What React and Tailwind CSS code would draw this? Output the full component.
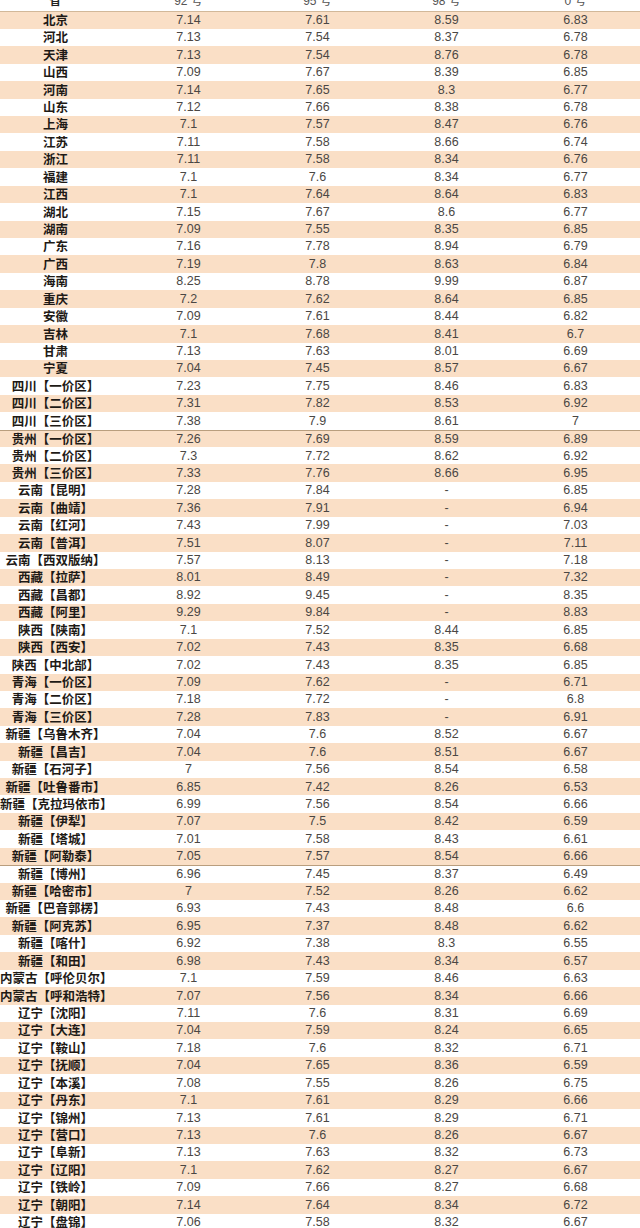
const rows = [
  ['北京', '7.14', '7.61', '8.59', '6.83'],
  ['河北', '7.13', '7.54', '8.37', '6.78'],
  ['天津', '7.13', '7.54', '8.76', '6.78'],
  ['山西', '7.09', '7.67', '8.39', '6.85'],
  ['河南', '7.14', '7.65', '8.3', '6.77'],
  ['山东', '7.12', '7.66', '8.38', '6.78'],
  ['上海', '7.1', '7.57', '8.47', '6.76'],
  ['江苏', '7.11', '7.58', '8.66', '6.74'],
  ['浙江', '7.11', '7.58', '8.34', '6.76'],
  ['福建', '7.1', '7.6', '8.34', '6.77'],
  ['江西', '7.1', '7.64', '8.64', '6.83'],
  ['湖北', '7.15', '7.67', '8.6', '6.77'],
  ['湖南', '7.09', '7.55', '8.35', '6.85'],
  ['广东', '7.16', '7.78', '8.94', '6.79'],
  ['广西', '7.19', '7.8', '8.63', '6.84'],
  ['海南', '8.25', '8.78', '9.99', '6.87'],
  ['重庆', '7.2', '7.62', '8.64', '6.85'],
  ['安徽', '7.09', '7.61', '8.44', '6.82'],
  ['吉林', '7.1', '7.68', '8.41', '6.7'],
  ['甘肃', '7.13', '7.63', '8.01', '6.69'],
  ['宁夏', '7.04', '7.45', '8.57', '6.67'],
  ['四川【一价区】', '7.23', '7.75', '8.46', '6.83'],
  ['四川【二价区】', '7.31', '7.82', '8.53', '6.92'],
  ['四川【三价区】', '7.38', '7.9', '8.61', '7'],
  ['贵州【一价区】', '7.26', '7.69', '8.59', '6.89'],
  ['贵州【二价区】', '7.3', '7.72', '8.62', '6.92'],
  ['贵州【三价区】', '7.33', '7.76', '8.66', '6.95'],
  ['云南【昆明】', '7.28', '7.84', '-', '6.85'],
  ['云南【曲靖】', '7.36', '7.91', '-', '6.94'],
  ['云南【红河】', '7.43', '7.99', '-', '7.03'],
  ['云南【普洱】', '7.51', '8.07', '-', '7.11'],
  ['云南【西双版纳】', '7.57', '8.13', '-', '7.18'],
  ['西藏【拉萨】', '8.01', '8.49', '-', '7.32'],
  ['西藏【昌都】', '8.92', '9.45', '-', '8.35'],
  ['西藏【阿里】', '9.29', '9.84', '-', '8.83'],
  ['陕西【陕南】', '7.1', '7.52', '8.44', '6.85'],
  ['陕西【西安】', '7.02', '7.43', '8.35', '6.68'],
  ['陕西【中北部】', '7.02', '7.43', '8.35', '6.85'],
  ['青海【一价区】', '7.09', '7.62', '-', '6.71'],
  ['青海【二价区】', '7.18', '7.72', '-', '6.8'],
  ['青海【三价区】', '7.28', '7.83', '-', '6.91'],
  ['新疆【乌鲁木齐】', '7.04', '7.6', '8.52', '6.67'],
  ['新疆【昌吉】', '7.04', '7.6', '8.51', '6.67'],
  ['新疆【石河子】', '7', '7.56', '8.54', '6.58'],
  ['新疆【吐鲁番市】', '6.85', '7.42', '8.26', '6.53'],
  ['新疆【克拉玛依市】', '6.99', '7.56', '8.54', '6.66'],
  ['新疆【伊犁】', '7.07', '7.5', '8.42', '6.59'],
  ['新疆【塔城】', '7.01', '7.58', '8.43', '6.61'],
  ['新疆【阿勒泰】', '7.05', '7.57', '8.54', '6.66'],
  ['新疆【博州】', '6.96', '7.45', '8.37', '6.49'],
  ['新疆【哈密市】', '7', '7.52', '8.26', '6.62'],
  ['新疆【巴音郭楞】', '6.93', '7.43', '8.48', '6.6'],
  ['新疆【阿克苏】', '6.95', '7.37', '8.48', '6.62'],
  ['新疆【喀什】', '6.92', '7.38', '8.3', '6.55'],
  ['新疆【和田】', '6.98', '7.43', '8.34', '6.57'],
  ['内蒙古【呼伦贝尔】', '7.1', '7.59', '8.46', '6.63'],
  ['内蒙古【呼和浩特】', '7.07', '7.56', '8.34', '6.66'],
  ['辽宁【沈阳】', '7.11', '7.6', '8.31', '6.69'],
  ['辽宁【大连】', '7.04', '7.59', '8.24', '6.65'],
  ['辽宁【鞍山】', '7.18', '7.6', '8.32', '6.71'],
  ['辽宁【抚顺】', '7.04', '7.65', '8.36', '6.59'],
  ['辽宁【本溪】', '7.08', '7.55', '8.26', '6.75'],
  ['辽宁【丹东】', '7.1', '7.61', '8.29', '6.66'],
  ['辽宁【锦州】', '7.13', '7.61', '8.29', '6.71'],
  ['辽宁【营口】', '7.13', '7.6', '8.26', '6.67'],
  ['辽宁【阜新】', '7.13', '7.63', '8.32', '6.73'],
  ['辽宁【辽阳】', '7.1', '7.62', '8.27', '6.67'],
  ['辽宁【铁岭】', '7.09', '7.66', '8.27', '6.68'],
  ['辽宁【朝阳】', '7.14', '7.64', '8.34', '6.72'],
  ['辽宁【盘锦】', '7.06', '7.58', '8.32', '6.67'],
];

const pageBreaks = [24, 49];

const nameFont = "font-['Noto_Sans_CJK_SC',sans-serif]";
const numFont = "font-['Liberation_Sans',Arial,sans-serif]";

const App = () => {
  return (
    <div className="w-[640px] h-[1228px] overflow-hidden bg-white">
      {/* Header (cut off by the crop) */}
      <div className="-mt-[10.5px] h-[22px] grid grid-cols-[124px_1fr_1fr_1fr_1fr] items-center border-b border-[#d2b899] text-[12px] text-[#555]">
        <div className={`pr-[14px] text-center font-bold text-[#222] ${nameFont}`}>省</div>
        <div className={`text-center ${numFont}`}>92 <span className={nameFont}>号</span></div>
        <div className={`text-center ${numFont}`}>95 <span className={nameFont}>号</span></div>
        <div className={`text-center ${numFont}`}>98 <span className={nameFont}>号</span></div>
        <div className={`text-center ${numFont}`}>0 <span className={nameFont}>号</span></div>
      </div>

      {rows.map((r, i) => (
        <div
          key={r[0]}
          className={`h-[17.43px] grid grid-cols-[124px_1fr_1fr_1fr_1fr] items-center leading-none ${
            i % 2 === 0 ? 'bg-[#fadfc6]' : 'bg-white'
          } ${pageBreaks.includes(i) ? 'border-t border-[#b99e7e]' : ''}`}
        >
          <div className={`pr-[13px] text-center whitespace-nowrap text-[12.5px] font-bold text-[#1e1a16] ${nameFont}`}>
            {r[0]}
          </div>
          {r.slice(1).map((v, j) => (
            <div key={j} className={`text-center text-[12.5px] text-[#4a4744] ${numFont}`}>
              {v}
            </div>
          ))}
        </div>
      ))}
    </div>
  );
};

export default App;
